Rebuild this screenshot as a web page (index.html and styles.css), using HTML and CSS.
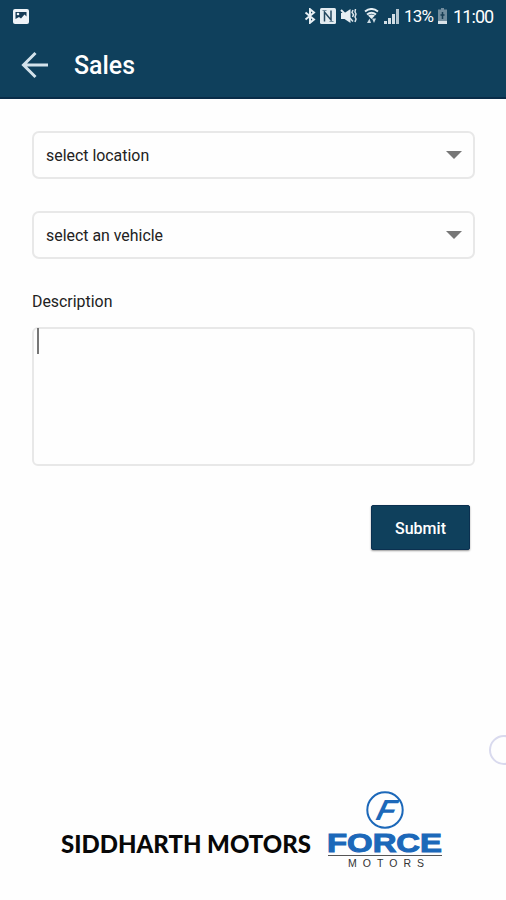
FILE: index.html
```html
<!doctype html>

<html lang="en">
<head>
  <meta charset="utf-8">
  <title>Sales</title>
  <meta name="viewport" content="width=device-width, initial-scale=1.0">
  <link rel="stylesheet" href="styles.css">
</head>
<body>

  <header>
    <div class="status">
      <svg class="picture" width="16" height="15" viewBox="0 0 16 15">
        <rect width="16" height="15" rx="2" fill="#eef3f8"/>
        <path d="M2.5 3h11v4.5l-2-2-3.500 4-2-1.500-3.500 2z" fill="#153b56"/>
        <circle cx="5" cy="5" r="1.300" fill="#eef3f8"/>
      </svg>
      <div class="indicators">
        <svg class="bluetooth" width="12" height="16" viewBox="0 0 12 16">
          <path d="M1.500 4.500l8.500 7-4 3.300V1.200l4 3.300-8.500 7" fill="none" stroke="#e6eef3" stroke-width="2"/>
        </svg>
        <svg class="nfc" width="16" height="16" viewBox="0 0 16 16">
          <rect width="16" height="16" rx="1.500" fill="#e3ebf0"/>
          <path d="M4.500 13.500V4l6.500 8V2.500" fill="none" stroke="#24485f" stroke-width="1.500"/>
          <path d="M2.500 2.500h4M9.500 13.500h4" stroke="#6f8a9b" stroke-width="1"/>
        </svg>
        <svg class="mute" width="17" height="16" viewBox="0 0 17 16">
          <path d="M1 5h3.500L10.500 1v14L4.500 11H1z" fill="#e6eef3"/>
          <path d="M1 2l4 4" stroke="#e6eef3" stroke-width="2"/>
          <path d="M10 10l3 3.500M13 2l-1 2.500 1.500 2-1 2.500M15.500 1l-.500 3 1 2-1 3 1 2-1 3" fill="none" stroke="#dce6ec" stroke-width="1.500"/>
        </svg>
        <svg class="wifi" width="15" height="16" viewBox="0 0 15 16">
          <path d="M1 3.500Q7.500-1.500 14 3.500M3 6.500q4.500-3.500 9 0" fill="none" stroke="#e6eef3" stroke-width="2"/>
          <path d="M4 7.500q3.500-2 7 0L7.500 11z" fill="#e6eef3"/>
          <path d="M3 15l2.500-4.500L7 15zM8 10.500h4L10 15z" fill="#c9d8e1"/>
        </svg>
        <svg class="signal" width="15" height="15" viewBox="0 0 15 15">
          <path d="M0 15v-3h3v3zM4 15V9h3v6zM8 15V5h3v10z" fill="#d2dee5"/>
          <path d="M12 15V0h3v15z" fill="#b5c6d0"/>
        </svg>
        <span class="percent">13%</span>
        <svg class="battery" width="9" height="16" viewBox="0 0 9 16">
          <path d="M3 0h3v1.500h3V16H0V1.500h3z" fill="#718c9d"/>
          <path d="M0 13h9v3H0z" fill="#d9e3e9"/>
          <path d="M4.500 4v3M2.500 7h4M4.500 7v4" stroke="#183d53" stroke-width="1.500"/>
        </svg>
        <span class="time">11:00</span>
      </div>
    </div>

    <div class="toolbar">
      <svg class="back" width="28" height="28" viewBox="0 0 28 28">
        <path d="M14.500 2L2.500 14l12 12M3 14h24" fill="none" stroke="#d3e2eb" stroke-width="3"/>
      </svg>
      <h1><svg width="62" height="34"><text x="0" y="26" textLength="61" lengthAdjust="spacingAndGlyphs">Sales</text></svg></h1>
    </div>
  </header>

  <main>
    <div class="select">
      <span>select location</span>
      <svg width="16" height="8" viewBox="0 0 16 8"><path d="M0 0h16L8 8z" fill="#777"/></svg>
    </div>
    <div class="select">
      <span>select an vehicle</span>
      <svg width="16" height="8" viewBox="0 0 16 8"><path d="M0 0h16L8 8z" fill="#777"/></svg>
    </div>

    <p class="label">Description</p>
    <div class="description"><i class="caret"></i></div>

    <button class="submit">Submit</button>
  </main>

  <footer>
    <svg class="dealer" width="252" height="40">
      <text x="0" y="28" textLength="250" lengthAdjust="spacingAndGlyphs">SIDDHARTH MOTORS</text>
    </svg>
    <svg class="force" width="118" height="84" viewBox="0 0 118 84">
      <circle cx="57" cy="20" r="17.700" fill="none" stroke="#1c68b9" stroke-width="2"/>
      <text class="emblem" transform="translate(45.500 30) skewX(-25)" textLength="18" lengthAdjust="spacingAndGlyphs">F</text>
      <text class="name" x="-1" y="61.500" textLength="115" lengthAdjust="spacingAndGlyphs">FORCE</text>
      <path d="M0 65.500h114" stroke="#555" stroke-width="1.200"/>
      <text class="motors" x="20" y="76.500" textLength="76">MOTORS</text>
    </svg>
  </footer>

  <div class="bubble"></div>

</body>
</html>
```
FILE: styles.css
```css
html {
  height: 100%;
}

body {
  height: 100%;
  margin: 0;
  display: flex;
  flex-direction: column;
  position: relative;
  overflow: hidden;
  background-color: #fefefe;
  color: #222;
  font-family: Roboto, sans-serif;
}

header {
  box-sizing: border-box;
  height: 99px;
  background-color: #0f405c;
  border-bottom: 2px solid #092c48;
  color: white;
}

/* Phone status bar */

.status {
  height: 32px;
  display: flex;
  align-items: center;
  justify-content: space-between;
  padding: 0 13px;
  font-size: 18px;
}

.indicators {
  display: flex;
  align-items: center;
}

.nfc {
  margin-left: 4px;
}

.mute {
  margin-left: 4px;
}

.wifi {
  margin-left: 7px;
}

.signal {
  margin-left: 5px;
}

.percent {
  width: 30px;
  margin-left: 5px;
  font-size: 17px;
  letter-spacing: -0.8px;
}

.battery {
  margin-left: 4px;
}

.time {
  width: 40px;
  margin-left: 6px;
  letter-spacing: -0.9px;
  white-space: nowrap;
}

.toolbar {
  height: 65px;
  display: flex;
  align-items: center;
  padding-left: 21px;
}

h1 {
  margin: 0 0 0 25px;
  height: 34px;
}

h1 svg {
  display: block;
}

h1 text {
  fill: white;
  font-size: 25px;
  font-weight: 500;
}

/* Form */

main {
  flex: 1;
  display: flex;
  flex-direction: column;
  padding: 32px 31px 0 32px;
}

.select {
  box-sizing: border-box;
  height: 48px;
  margin-bottom: 32px;
  padding: 0 11px 0 12px;
  display: flex;
  align-items: center;
  justify-content: space-between;
  border: 2px solid #e8e8e8;
  border-radius: 7px;
  font-size: 15.9px;
}

.label {
  margin: 0;
  font-size: 15.9px;
  line-height: 22px;
}

.description {
  box-sizing: border-box;
  height: 139px;
  margin-top: 14px;
  border: 2px solid #e8e8e8;
  border-radius: 6px;
}

.caret {
  display: block;
  width: 2px;
  height: 26px;
  margin: -1px 0 0 3px;
  background-color: #777;
}

.submit {
  width: 99px;
  height: 45px;
  margin: 39px 5px 0 0;
  padding: 2px 0 0;
  align-self: flex-end;
  border: 1px solid #0b3050;
  border-radius: 2px;
  background-color: #0f405c;
  box-shadow: 0 1px 2px rgba(0, 0, 0, 0.4);
  color: white;
  font-family: Roboto, sans-serif;
  font-size: 16px;
  font-weight: 500;
}

/* Logos */

footer {
  height: 110px;
  display: flex;
  align-items: flex-start;
  padding-left: 61px;
}

.dealer {
  margin-top: 35px;
}

.dealer text {
  fill: #080808;
  font-family: Lato, sans-serif;
  font-size: 24px;
  font-weight: 900;
}

.force {
  margin-left: 15px;
  overflow: visible;
}

.emblem {
  fill: #1c68b9;
  font-family: "Liberation Sans", sans-serif;
  font-size: 29px;
  font-weight: bold;
}

.name {
  fill: #1c68b9;
  stroke: #1c68b9;
  stroke-width: 1;
  font-family: "Liberation Sans", sans-serif;
  font-size: 25px;
  font-weight: bold;
}

.motors {
  fill: #333;
  font-family: "Liberation Sans", sans-serif;
  font-size: 10.5px;
}

/* Floating edge handle */

.bubble {
  position: absolute;
  left: 489px;
  top: 735px;
  width: 26px;
  height: 26px;
  border: 2px solid #d9daee;
  border-radius: 50%;
}
```
